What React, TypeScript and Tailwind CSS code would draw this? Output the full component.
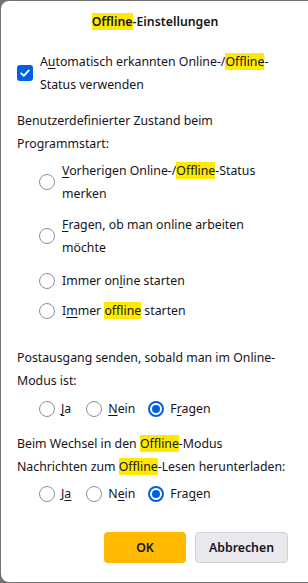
import React from "react";

const H = ({ children }: { children: React.ReactNode }) => (
  <span className="bg-[#ffe900]">{children}</span>
);
const U = ({ children }: { children: React.ReactNode }) => (
  <span className="underline underline-offset-2 decoration-1">{children}</span>
);

const Radio = ({ checked = false }: { checked?: boolean }) =>
  checked ? (
    <span className="w-4 h-4 rounded-full border-2 border-[#0061e0] flex items-center justify-center shrink-0 bg-white">
      <span className="w-2 h-2 rounded-full bg-[#0061e0]" />
    </span>
  ) : (
    <span className="block w-4 h-4 rounded-full border border-[#8f8f9d] shrink-0 bg-white" />
  );

const RadioItem = ({
  children,
  className = "",
}: {
  children: React.ReactNode;
  className?: string;
}) => (
  <div className={"flex items-center gap-[7px] pl-[22px] " + className}>
    <Radio />
    <div className="whitespace-nowrap">{children}</div>
  </div>
);

const Opt = ({
  children,
  checked = false,
  className = "",
}: {
  children: React.ReactNode;
  checked?: boolean;
  className?: string;
}) => (
  <div className={"flex items-center gap-[6px] " + className}>
    <Radio checked={checked} />
    <span>{children}</span>
  </div>
);

export default function App() {
  return (
    <div className="w-[308px] h-[583px] bg-[#737373] pl-px pt-px overflow-hidden">
      <div
        className="bg-white rounded-[8px] h-[581px] w-[315px] text-[12.3px] leading-[23px] text-[#15141a] pl-4 whitespace-nowrap"
        style={{ fontFamily: '"Noto Sans", "Open Sans", sans-serif' }}
      >
        <div className="pt-[9px] text-center font-semibold w-[276px]">
          <H>Offline</H>-Einstellungen
        </div>

        <div className="mt-[17px] flex items-center gap-[7px]">
          <span className="w-4 h-4 rounded-[3px] bg-[#0061e0] flex items-center justify-center shrink-0">
            <svg width="12" height="12" viewBox="0 0 12 12" fill="none">
              <path d="M2.2 6.3 L4.8 8.8 L9.8 3.4" stroke="white" strokeWidth="1.8" strokeLinecap="round" strokeLinejoin="round" />
            </svg>
          </span>
          <div>
            A<U>u</U>tomatisch erkannten Online-/<H>Offline</H>-
            <br />
            Status verwenden
          </div>
        </div>

        <div className="mt-[13px]">
          Benutzerdefinierter Zustand beim
          <br />
          Programmstart:
        </div>

        <RadioItem className="mt-[4px]">
          <U>V</U>orherigen Online-/<H>Offline</H>-Status
          <br />
          merken
        </RadioItem>
        <RadioItem className="mt-[8px]">
          <U>F</U>ragen, ob man online arbeiten
          <br />
          möchte
        </RadioItem>
        <RadioItem className="mt-[10px]">
          Immer on<U>l</U>ine starten
        </RadioItem>
        <RadioItem className="mt-[7px]">
          I<U>m</U>mer <H>offline</H> starten
        </RadioItem>

        <div className="mt-[24px]">
          Postausgang senden, sobald man im Online-
          <br />
          Modus ist:
        </div>
        <div className="mt-[5px] flex items-center pl-[22px]">
          <Opt>
            <U>J</U>a
          </Opt>
          <Opt className="ml-[15px]">
            <U>N</U>ein
          </Opt>
          <Opt className="ml-[13px]" checked>
            F<U>r</U>agen
          </Opt>
        </div>

        <div className="mt-[12px]">
          Beim Wechsel in den <H>Offline</H>-Modus
          <br />
          Nachrichten zum <H>Offline</H>-Lesen herunterladen:
        </div>
        <div className="mt-[4px] flex items-center pl-[22px]">
          <Opt>
            J<U>a</U>
          </Opt>
          <Opt className="ml-[15px]">
            N<U>e</U>in
          </Opt>
          <Opt className="ml-[13px]" checked>
            Fra<U>g</U>en
          </Opt>
        </div>

        <div className="mt-[27px] flex gap-[9px] pl-[87px]">
          <button className="w-[82px] h-[31px] rounded-[4px] bg-[#ffb900] font-semibold text-[#15141a]">
            OK
          </button>
          <button className="w-[93px] h-[31px] rounded-[4px] bg-[#e9e9ed] border border-[#d0d0d7] font-semibold text-[#15141a]">
            Abbrechen
          </button>
        </div>
      </div>
    </div>
  );
}
